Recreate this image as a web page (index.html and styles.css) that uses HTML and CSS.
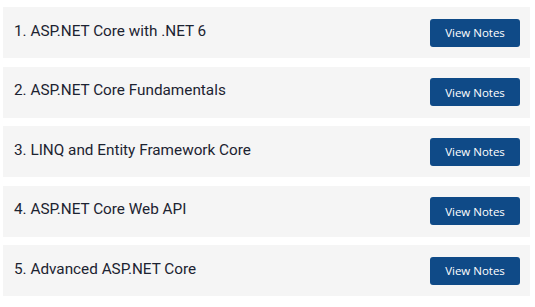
FILE: index.html
```html
<!DOCTYPE html>
<html>

<head>
    <title>Course Notes</title>
    <link rel="stylesheet" href="styles.css">
</head>

<body>
    <div class="notes-list">
        <div class="notes-item">
            <div class="notes-title">1. ASP.NET Core with .NET 6</div>
            <button class="notes-button">View Notes</button>
        </div>
        <div class="notes-item">
            <div class="notes-title">2. ASP.NET Core Fundamentals</div>
            <button class="notes-button">View Notes</button>
        </div>
        <div class="notes-item">
            <div class="notes-title">3. LINQ and Entity Framework Core</div>
            <button class="notes-button">View Notes</button>
        </div>
        <div class="notes-item">
            <div class="notes-title">4. ASP.NET Core Web API</div>
            <button class="notes-button">View Notes</button>
        </div>
        <div class="notes-item">
            <div class="notes-title">5. Advanced ASP.NET Core</div>
            <button class="notes-button">View Notes</button>
        </div>
    </div>
</body>

</html>
```

FILE: styles.css
```css
body {
    font-family: Roboto, Arial, sans-serif;
    background-color: #fff;
    margin: 0;
    padding: 7px 5px 0 3px;
}

.notes-list {
    display: flex;
    flex-direction: column;
    gap: 8.5px;
}

.notes-item {
    display: flex;
    align-items: center;
    justify-content: space-between;
    height: 51px;
    padding: 0 10px 0 11px;
    background-color: #f5f5f5;
}

.notes-title {
    font-size: 15.3px;
    color: #1c2331;
    margin-top: -4px;
}

.notes-button {
    width: 90px;
    height: 28px;
    padding: 0;
    font-family: "Open Sans", Arial, sans-serif;
    font-size: 11.5px;
    color: #fff;
    background-color: #0f4a87;
    border: none;
    border-radius: 3px;
    cursor: pointer;
}
```
